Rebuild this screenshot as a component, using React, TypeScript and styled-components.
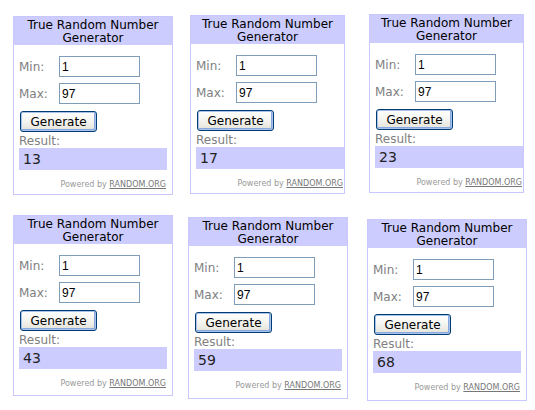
import React from "react";
import styled, { createGlobalStyle } from "styled-components";

const Global = createGlobalStyle`
  html, body { margin: 0; padding: 0; background: #ffffff; }
  body { font-family: "DejaVu Sans", Verdana, sans-serif; }
`;

const Page = styled.div`
  display: grid;
  grid-template-columns: 180px 180px 175px;
  grid-template-rows: 200px 210px;
  width: 535px;
  height: 410px;
  overflow: hidden;
`;

const Card = styled.div<{ $ml: number; $mt: number; $pr: number; $pb: number }>`
  align-self: start;
  justify-self: start;
  margin-left: ${(p) => p.$ml}px;
  margin-top: ${(p) => p.$mt}px;
  border: 1px solid #c8c8ff;
  background: #ffffff;
  display: flex;
  flex-direction: column;
  padding-bottom: ${(p) => p.$pb}px;
  box-sizing: content-box;
  width: ${(p) => 158 - (5 - p.$pr)}px;
`;

const Header = styled.div`
  background: #ccccff;
  color: #000;
  text-align: center;
  font-size: 12px;
  line-height: 13px;
  padding-top: 2px;
  height: 26px;
`;

const Body = styled.div<{ $pr: number }>`
  display: flex;
  flex-direction: column;
  padding: 11px ${(p) => p.$pr}px 0 5px;
`;

const Row = styled.div<{ $gap: number }>`
  display: flex;
  align-items: baseline;
  margin-bottom: ${(p) => p.$gap}px;
`;

const Label = styled.span`
  width: 40px;
  flex: none;
  font-size: 12px;
  color: #808080;
`;

const Input = styled.input`
  box-sizing: border-box;
  width: 81px;
  height: 21px;
  border: 1px solid #7f9db9;
  padding: 0 2px;
  margin: 0;
  font-family: "Liberation Sans", Arial, sans-serif;
  font-size: 12px;
  color: #000;
  background: #fff;
  outline: none;
`;

const Button = styled.button`
  box-sizing: border-box;
  width: 77px;
  height: 21px;
  margin: 0 0 0 1px;
  padding: 0;
  border: 1px solid #003c74;
  border-radius: 3px;
  background: linear-gradient(#ffffff 0%, #f4f4f0 50%, #e4e2d8 100%);
  box-shadow: inset 0 0 0 1px #a9c2ea, inset -1px -1px 0 1px #88a8e0;
  font-family: "DejaVu Sans", Verdana, sans-serif;
  font-size: 12px;
  color: #000;
  align-self: flex-start;
`;

const ResultLabel = styled.div`
  margin-top: 2px;
  font-size: 12px;
  line-height: 14px;
  color: #808080;
`;

const ResultBox = styled.div`
  height: 22px;
  line-height: 22px;
  background: #ccccff;
  padding-left: 4px;
  font-size: 14px;
  color: #222;
`;

const Powered = styled.div`
  margin-top: 9px;
  line-height: 12px;
  font-size: 8px;
  color: #999999;
  text-align: right;
  padding-right: 1px;
  white-space: nowrap;
`;

const OrgLink = styled.span`
  color: #777777;
  text-decoration: underline;
`;

type Gen = { ml: number; mt: number; pr: number; pb: number; result: number };

const gens: Gen[] = [
  { ml: 13, mt: 16, pr: 5, pb: 3, result: 13 },
  { ml: 10, mt: 15, pr: 0, pb: 3, result: 17 },
  { ml: 9, mt: 14, pr: 0, pb: 3, result: 23 },
  { ml: 13, mt: 15, pr: 5, pb: 5, result: 43 },
  { ml: 8, mt: 17, pr: 5, pb: 6, result: 59 },
  { ml: 7, mt: 19, pr: 5, pb: 6, result: 68 },
];

function Generator({ g }: { g: Gen }) {
  return (
    <Card $ml={g.ml} $mt={g.mt} $pr={g.pr} $pb={g.pb}>
      <Header>
        True Random Number
        <br />
        Generator
      </Header>
      <Body $pr={g.pr}>
        <Row $gap={6}>
          <Label>Min:</Label>
          <Input defaultValue="1" />
        </Row>
        <Row $gap={7}>
          <Label>Max:</Label>
          <Input defaultValue="97" />
        </Row>
        <Button type="button">Generate</Button>
        <ResultLabel>Result:</ResultLabel>
        <ResultBox>{g.result}</ResultBox>
        <Powered>
          Powered by <OrgLink>RANDOM.ORG</OrgLink>
        </Powered>
      </Body>
    </Card>
  );
}

export default function App() {
  return (
    <>
      <Global />
      <Page>
        {gens.map((g, i) => (
          <Generator key={i} g={g} />
        ))}
      </Page>
    </>
  );
}
